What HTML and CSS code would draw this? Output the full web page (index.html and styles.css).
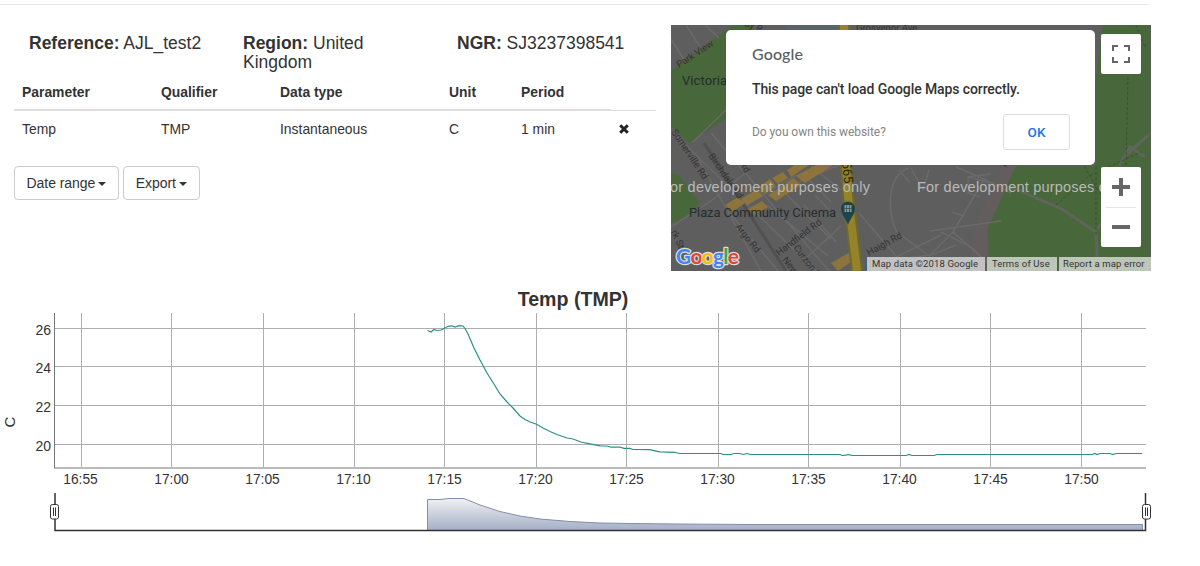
FILE: index.html
```
<!DOCTYPE html>
<html lang="en">
  <head>
    <meta charset="UTF-8" />
    <meta name="viewport" content="width=device-width, initial-scale=1.0" />
    <title>AJL_test2</title>
    <link rel="stylesheet" href="styles.css">
  </head>
  <body>
    <hr class="top-line">
    <div class="station">
      <div class="details">
        <div class="summary">
          <div class="item"><b>Reference:</b> AJL_test2</div>
          <div class="item"><b>Region:</b> United Kingdom</div>
          <div class="item"><b>NGR:</b> SJ3237398541</div>
        </div>
        <table class="params">
          <thead>
            <tr>
              <th class="col-param">Parameter</th>
              <th class="col-qual">Qualifier</th>
              <th class="col-type">Data type</th>
              <th class="col-unit">Unit</th>
              <th class="col-period">Period</th>
              <td class="col-remove"></td>
            </tr>
          </thead>
          <tbody>
            <tr>
              <td>Temp</td>
              <td>TMP</td>
              <td>Instantaneous</td>
              <td>C</td>
              <td>1 min</td>
              <td>
                <svg class="remove" width="10" height="10" viewBox="0 0 10 10"><path d="M1.2 1.2L8.8 8.8M8.8 1.2L1.2 8.8" /></svg>
              </td>
            </tr>
          </tbody>
        </table>
        <div class="buttons">
          <button type="button">Date range<span class="caret"></span></button>
          <button type="button">Export<span class="caret"></span></button>
        </div>
      </div>

      <div class="map">
        <svg class="tiles" width="480" height="246" viewBox="0 0 480 246">
          <rect width="480" height="246" fill="#5e5e5e" />
          <!-- parks -->
          <path fill="#48673a" d="M0 46L62 0H82V75L18 118L0 101Z" />
          <path fill="#48673a" d="M0 148L8 150L28 177L20 190L0 198Z" />
          <path fill="#635d5d" d="M332 140L352 141L317 202L316 246H298L304 200Z" />
          <path fill="#48673a" d="M424 60L432 0H480V246H318L317 203L345 141H424Z" />
          <!-- side streets -->
          <g fill="none" stroke="#6a6a6a" stroke-width="1.5">
            <path d="M15 0L30 23M34 0L48 13M0 14L14 36" />
            <path d="M0 106L145 246M22 117L60 80M40 108L158 246M0 202L40 176L78 145" />
            <path d="M28 135L90 246M58 187L107 246M76 180L124 151L175 133" />
            <path d="M96 180L157 231M115 169L160 214M128 157L175 137M133 235L170 201" />
            <path d="M133 180L165 217M144 170L158 185M188 188L238 246M199 245L270 210" />
            <path d="M135 151L160 177M140 141L170 165" />
            <path d="M238 143C215 150 216 190 226 207L258 231L285 220" />
            <path d="M240 143L252 165L258 145M270 207L300 222L319 240" />
            <path d="M225 235L259 230L282 207L319 240M282 207L305 168L313 154" />
            <path d="M259 206L330 196M297 152L320 158M320 149L297 152L297 168L309 172M281 187L293 191M228 145L239 158" />
            <path d="M285 142L313 154L340 168" />
          </g>
          <path d="M33 118L115 246" fill="none" stroke="#515151" stroke-width="3" />
          <path d="M340 162L391 184L425 207L427 246M425 205L447 181M455 130L480 108M448 141L459 122L474 132" fill="none" stroke="#5f655b" stroke-width="3" />
          <path d="M385 180L418 151L470 127M413 141L430 170M457 52L455 140M465 0L474 22L480 14M425 142V210" fill="none" stroke="#3b5132" stroke-dasharray="3 2" />
          <path d="M115 2H175" stroke="#58646b" stroke-width="5" />
          <path d="M478.500 0V246" stroke="#565c54" stroke-width="2" />
          <!-- shops -->
          <g fill="#8c743c">
            <path d="M54 180L67 172L74 178L61 187ZM70 174L86 164L92 171L76 180ZM77 184L91 176L97 182L83 190Z" />
            <path d="M88 162L99 154L105 161L94 169ZM101 153L112 147L117 153L107 159ZM116 145L127 138L138 140L120 152Z" />
            <path d="M97 170L123 153L130 160L105 176ZM125 151L145 140H162L134 158Z" />
            <path d="M160 238L183 225L187 232L167 246Z" />
          </g>
          <!-- main road -->
          <path d="M173 0L175 140L177 170L186 246" fill="none" stroke="#6f6830" stroke-width="12" />
          <path d="M173 0L175 140L177 170L186 246" fill="none" stroke="#948328" stroke-width="8" />
          <path d="M194 246V235C198 231 207 231 209 235V246Z" fill="#39647f" />
          <g class="street">
            <text transform="translate(8 43) rotate(-33)">Park View</text>
            <text transform="translate(0 107) rotate(56)">Somerville Rd</text>
            <text transform="translate(37 131) rotate(55)">Birchdale Rd</text>
            <text transform="translate(68 139) rotate(57)">Rd</text>
            <text transform="translate(64 202) rotate(51)">Argo Rd</text>
            <text transform="translate(108 231) rotate(-37)">Handfield Rd</text>
            <text transform="translate(198 231) rotate(-29)">Haigh Rd</text>
            <text transform="translate(122 223) rotate(52)">Curzon Rd</text>
            <text transform="translate(111 235) rotate(52)">New St</text>
            <text transform="translate(0 207) rotate(65)">rk St</text>
            <text x="185" y="6">Grosvenor Ave</text>
            <text transform="translate(73 1) rotate(20)">by R</text>
            <text transform="translate(325 139) rotate(15)">Rd</text>
          </g>
          <text class="road-no" transform="translate(171 137) rotate(84)">565</text>
          <text class="place" x="11" y="60" textLength="45">Victoria</text>
          <text class="place" x="18" y="191.500" textLength="147">Plaza Community Cinema</text>
          <path d="M177 200C175 193 170 190 170 183.500A7 7 0 0 1 184 183.500C184 190 179 193 177 200Z" fill="#1d4547" />
          <path d="M173.500 180H180.500V187H173.500Z" fill="#8b9798" />
          <path d="M175.500 180V187M178.500 180V187M173.500 183.500H180.500" stroke="#1d4547" stroke-width="0.7" />
          <text class="dev" x="-10" y="167" textLength="209">For development purposes only</text>
          <text class="dev" x="246" y="167" textLength="209">For development purposes only</text>
          <text class="logo" x="5" y="239" textLength="63"><tspan fill="#4285f4">G</tspan><tspan fill="#ea4335">o</tspan><tspan fill="#fbbc05">o</tspan><tspan fill="#4285f4">g</tspan><tspan fill="#34a853">l</tspan><tspan fill="#ea4335">e</tspan></text>
        </svg>
        <div class="credits">
          <span class="credit-data">Map data ©2018 Google</span>
          <span class="credit-terms">Terms of Use</span>
          <span class="credit-report">Report a map error</span>
        </div>
        <div class="dialog">
          <div class="dialog-brand">Google</div>
          <div class="dialog-title">This page can't load Google Maps correctly.</div>
          <div class="dialog-foot">
            <span>Do you own this website?</span>
            <button type="button" class="ok">OK</button>
          </div>
        </div>
        <div class="control fullscreen">
          <svg width="18" height="18" viewBox="0 0 18 18"><path d="M1 6V1H6M12 1H17V6M17 12V17H12M6 17H1V12" /></svg>
        </div>
        <div class="control zoom">
          <svg width="40" height="80" viewBox="0 0 40 80">
            <path class="sign" d="M11 20H29M20 11V29M11 60H29" />
            <path class="split" d="M5 40.500H35" />
          </svg>
        </div>
      </div>
    </div>

    <h2 class="chart-title">Temp (TMP)</h2>
    <svg class="chart" width="1200" height="230" viewBox="0 313 1200 230">
      <defs>
        <linearGradient id="fade" x1="0" y1="0" x2="0" y2="1">
          <stop offset="0" stop-color="#f0f1f4" />
          <stop offset="1" stop-color="#a5afc6" />
        </linearGradient>
      </defs>
      <path class="grid" d="M81.500 313V467M171.500 313V467M263.500 313V467M354.500 313V467M444.500 313V467M536.500 313V467M626.500 313V467M718.500 313V467M808.500 313V467M900.500 313V467M990.500 313V467M1081.500 313V467" />
      <path class="grid" d="M55 328.500H1146M55 366.500H1146M55 405.500H1146M55 444.500H1146" />
      <path class="axis" d="M54.500 313V468M54 468H1146" />
      <g class="label y-label">
        <text x="51" y="334.500">26</text>
        <text x="51" y="373">24</text>
        <text x="51" y="411.500">22</text>
        <text x="51" y="450.500">20</text>
      </g>
      <g class="label x-label">
        <text x="80.500" y="484">16:55</text>
        <text x="171.500" y="484">17:00</text>
        <text x="262.500" y="484">17:05</text>
        <text x="353.500" y="484">17:10</text>
        <text x="444.500" y="484">17:15</text>
        <text x="535.500" y="484">17:20</text>
        <text x="626.500" y="484">17:25</text>
        <text x="717.500" y="484">17:30</text>
        <text x="808.500" y="484">17:35</text>
        <text x="899.500" y="484">17:40</text>
        <text x="990.500" y="484">17:45</text>
        <text x="1081.500" y="484">17:50</text>
      </g>
      <text class="unit" transform="translate(14.500 422) rotate(-90)">C</text>
      <path class="line" d="M427.500 330.500L431 332L434 329.500L437 330.500L441 330L444 328.500L448 326.300L452 325.800L455 327L459 325.600L463 326L465 328.500L468 334L474 348L480 360L487 373L493 382.500L500 394L507 402L513 408L520 416L525 419.500L530 422L536 424L543 428L550 431.500L557 434.500L567 438L573 439L581 442L590 443.800L600 445.800L607 446L611 447.200L620 447.200L624 448.400L630 448.400L633 449.500L650 449.700L655 450.800L660 451.800L675 452.300L679 453.500H721L723 454.500H731L734 453.500H740L743 454.500L747 453.500L751 454.500H840L842 455.500L846 455.200L848 454.500L852 455.500H906L909 454.500L912 455.500H934L937 454.500H1092L1095 453.500L1097 454.500L1100 453.500H1110L1113 454.500L1116 453.500H1142" />
      <path fill="url(#fade)" d="M427.500 530V499.500L440 499.500L449 498.500L464 498.500L480 505L500 511.500L520 516L540 519L570 521.500L600 523L630 523.500L680 524L750 524.500H1142.500V530Z" />
      <path class="range-line" d="M427.500 530V499.500L440 499.500L449 498.500L464 498.500L480 505L500 511.500L520 516L540 519L570 521.500L600 523L630 523.500L680 524L750 524.500H1142.500V530" />
      <path class="range-frame" d="M55 493V530.500H1145.500V493" />
      <g class="handle">
        <rect x="50.500" y="504.500" width="8" height="14.500" rx="2" />
        <path d="M53.500 507.500V516M55.500 507.500V516" />
        <rect x="1142.500" y="504.500" width="8" height="14.500" rx="2" />
        <path d="M1145.500 507.500V516M1147.500 507.500V516" />
      </g>
    </svg>
  </body>
</html>
```
FILE: styles.css
```
* {
  box-sizing: border-box;
}
body {
  margin: 0;
  font-family: "Liberation Sans", Arial, sans-serif;
  font-size: 14px;
  line-height: 20px;
  color: #333;
  background: white;
  overflow: hidden;
}
.top-line {
  width: 1149px;
  margin: 4px 0 20px;
  border: 0;
  border-top: 1px solid #e7e7e7;
}
.station {
  display: flex;
  gap: 15px;
  width: 1151px;
  height: 246px;
  padding-left: 14px;
}
.details {
  width: 642px;
}
.summary {
  display: flex;
  padding: 9px 0 0 15px;
}
.item {
  flex: none;
  width: 214px;
  padding-right: 34px;
  font-size: 17.5px;
  line-height: 19px;
}
.item:last-child {
  width: 199px;
  padding-right: 0;
}
.params {
  width: 642px;
  margin-top: 2px;
  table-layout: fixed;
  border-collapse: separate;
  border-spacing: 0;
  font-size: 13.9px;
}
.params th,
.params td {
  height: 37px;
  padding: 7px 8px;
  text-align: left;
  vertical-align: middle;
}
.params th {
  border-bottom: 2px solid #ddd;
}
.params thead td {
  border-bottom: 1px solid #ddd;
}
.params tbody td {
  height: 36px;
}
.col-param {
  width: 139px;
}
.col-qual {
  width: 119px;
}
.col-type {
  width: 169px;
}
.col-unit {
  width: 72px;
}
.col-period {
  width: 98px;
}
.remove {
  display: block;
  stroke: #222;
  stroke-width: 3;
}
.buttons {
  display: flex;
  gap: 4px;
  margin-top: 19px;
}
.buttons button {
  height: 34px;
  padding: 0 12px 0 11.5px;
  font: inherit;
  color: #333;
  background: white;
  border: 1px solid #ccc;
  border-radius: 4px;
  white-space: nowrap;
  letter-spacing: -0.05px;
}
.caret {
  display: inline-block;
  margin-left: 3px;
  vertical-align: middle;
  border-top: 4px solid #333;
  border-right: 4px solid transparent;
  border-left: 4px solid transparent;
}

.map {
  position: relative;
  width: 480px;
  height: 246px;
  overflow: hidden;
  font-family: Roboto, sans-serif;
}
.tiles {
  display: block;
}
.street {
  font-size: 9.5px;
  fill: #343434;
}
.place {
  font-size: 13px;
  fill: #252d30;
}
.road-no {
  font-size: 13px;
  fill: #282510;
}
.dev {
  font-family: "Liberation Sans", Arial, sans-serif;
  font-size: 14.5px;
  fill: #b9b9b9;
}
.logo {
  font-family: Lato, sans-serif;
  font-size: 21px;
  font-weight: bold;
  stroke: #ddd;
  stroke-width: 2.5;
  stroke-linejoin: round;
  paint-order: stroke;
}
.credits {
  position: absolute;
  right: 0;
  bottom: 0;
  display: flex;
  gap: 2px;
  font-size: 9.5px;
  line-height: 14px;
  letter-spacing: 0.13px;
  color: #333;
  white-space: nowrap;
}
.credits span {
  padding-left: 5px;
  background: #c2c2c2;
}
.credit-data {
  width: 118px;
}
.credits .credit-terms,
.credits .credit-report {
  background: #bdc6b8;
}
.credit-terms {
  width: 70px;
}
.credits .credit-report {
  width: 92px;
  padding-left: 4px;
}
.dialog {
  position: absolute;
  left: 55px;
  top: 5px;
  width: 369px;
  height: 135px;
  padding: 14px 25px 15px 26px;
  background: white;
  border-radius: 5px;
}
.dialog-brand {
  font-family: Lato, sans-serif;
  font-size: 16px;
  font-weight: 500;
  letter-spacing: 0.1px;
  color: #5a5e62;
}
.dialog-title {
  margin-top: 15px;
  font-size: 14px;
  font-weight: 500;
  letter-spacing: -0.1px;
  color: #333;
}
.dialog-foot {
  display: flex;
  justify-content: space-between;
  align-items: center;
  margin-top: 15px;
  font-size: 12px;
  letter-spacing: -0.05px;
  color: #858585;
}
.ok {
  width: 67px;
  height: 36px;
  font-family: inherit;
  font-size: 13.5px;
  font-weight: 500;
  color: #1a73e8;
  background: white;
  border: 1px solid #ddd;
  border-radius: 3px;
}
.control {
  position: absolute;
  left: 430px;
  width: 40px;
  background: white;
  border-radius: 2px;
}
.fullscreen {
  top: 9px;
  height: 40px;
  padding: 11px;
}
.fullscreen svg,
.zoom svg {
  display: block;
  fill: none;
  stroke: #666;
  stroke-width: 2;
}
.zoom {
  top: 142px;
  height: 80px;
}
.zoom .sign {
  stroke-width: 4;
}
.zoom .split {
  stroke: #e6e6e6;
  stroke-width: 1;
}

.chart-title {
  width: 1146px;
  height: 25px;
  margin: 17px 0 0;
  font-size: 19.6px;
  line-height: 22px;
  text-align: center;
}
.chart {
  display: block;
}
.grid {
  stroke: #aeaeae;
}
.axis {
  fill: none;
  stroke: #777;
}
.label {
  font-size: 14px;
  fill: #333;
}
.y-label {
  text-anchor: end;
}
.x-label {
  font-size: 13.8px;
  text-anchor: middle;
}
.unit {
  font-size: 15px;
  fill: #333;
  text-anchor: middle;
}
.line {
  fill: none;
  stroke: #2a9187;
  stroke-width: 1.2;
}
.range-line {
  fill: none;
  stroke: #808fab;
}
.range-frame {
  fill: none;
  stroke: #333;
  stroke-width: 1.5;
}
.handle {
  fill: white;
  stroke: #333;
}
```
